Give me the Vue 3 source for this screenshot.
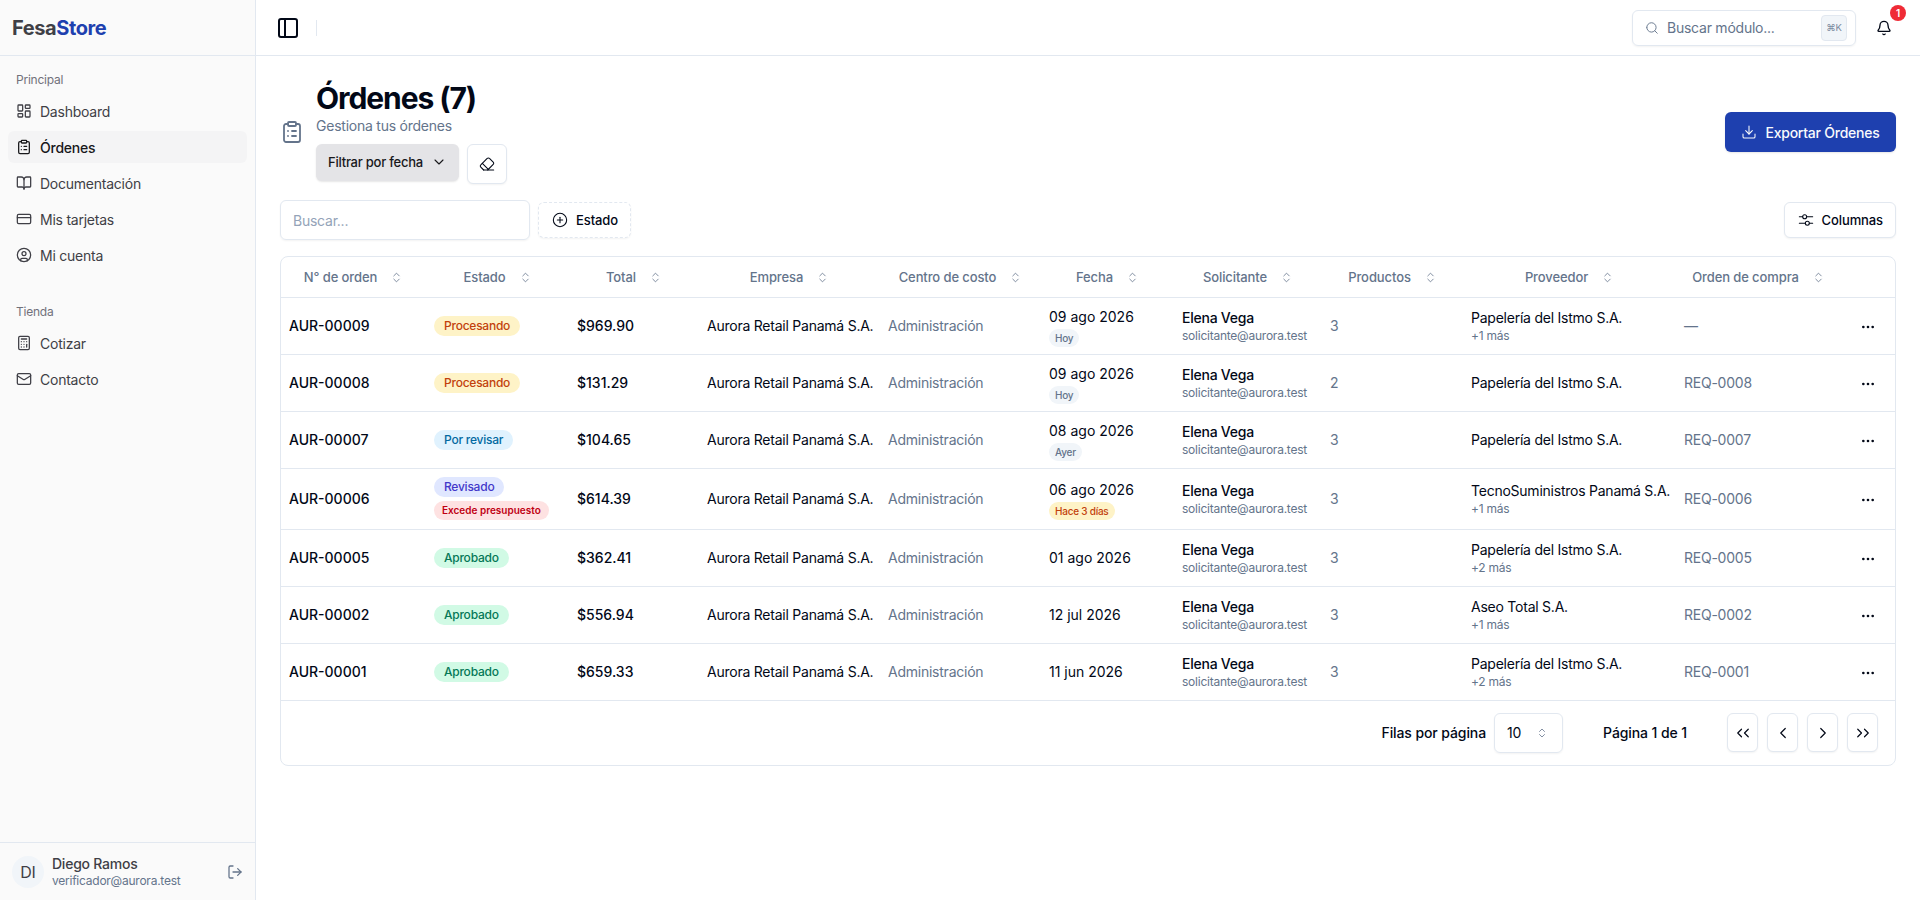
<script setup>
const c = (x, y, r) => `M${x - r} ${y}a${r} ${r} 0 1 0 ${2 * r} 0a${r} ${r} 0 1 0 ${-2 * r} 0`
const I = {
  dash: ['M4 3h5a1 1 0 0 1 1 1v7a1 1 0 0 1-1 1H4a1 1 0 0 1-1-1V4a1 1 0 0 1 1-1z', 'M15 3h5a1 1 0 0 1 1 1v3a1 1 0 0 1-1 1h-5a1 1 0 0 1-1-1V4a1 1 0 0 1 1-1z', 'M15 12h5a1 1 0 0 1 1 1v7a1 1 0 0 1-1 1h-5a1 1 0 0 1-1-1v-7a1 1 0 0 1 1-1z', 'M4 16h5a1 1 0 0 1 1 1v3a1 1 0 0 1-1 1H4a1 1 0 0 1-1-1v-3a1 1 0 0 1 1-1z'],
  clip: ['M9 2h6a1 1 0 0 1 1 1v2a1 1 0 0 1-1 1H9a1 1 0 0 1-1-1V3a1 1 0 0 1 1-1z', 'M16 4h2a2 2 0 0 1 2 2v14a2 2 0 0 1-2 2H6a2 2 0 0 1-2-2V6a2 2 0 0 1 2-2h2', 'M12 11h4', 'M12 16h4', 'M8 11h.01', 'M8 16h.01'],
  book: ['M12 7v14', 'M3 18a1 1 0 0 1-1-1V4a1 1 0 0 1 1-1h5a4 4 0 0 1 4 4 4 4 0 0 1 4-4h5a1 1 0 0 1 1 1v13a1 1 0 0 1-1 1h-6a3 3 0 0 0-3 3 3 3 0 0 0-3-3z'],
  card: ['M4 5h16a2 2 0 0 1 2 2v10a2 2 0 0 1-2 2H4a2 2 0 0 1-2-2V7a2 2 0 0 1 2-2z', 'M2 10h20'],
  user: [c(12, 12, 10), c(12, 10, 3), 'M7 20.662V19a2 2 0 0 1 2-2h6a2 2 0 0 1 2 2v1.662'],
  calc: ['M6 2h12a2 2 0 0 1 2 2v16a2 2 0 0 1-2 2H6a2 2 0 0 1-2-2V4a2 2 0 0 1 2-2z', 'M8 6h8', 'M16 14v4', 'M16 10h.01', 'M12 10h.01', 'M8 10h.01', 'M12 14h.01', 'M8 14h.01', 'M12 18h.01', 'M8 18h.01'],
  mail: ['M4 4h16a2 2 0 0 1 2 2v12a2 2 0 0 1-2 2H4a2 2 0 0 1-2-2V6a2 2 0 0 1 2-2z', 'M22 7l-8.97 5.7a1.94 1.94 0 0 1-2.06 0L2 7'],
  logout: ['M9 21H5a2 2 0 0 1-2-2V5a2 2 0 0 1 2-2h4', 'M16 17l5-5-5-5', 'M21 12H9'],
  panel: ['M5 3h14a2 2 0 0 1 2 2v14a2 2 0 0 1-2 2H5a2 2 0 0 1-2-2V5a2 2 0 0 1 2-2z', 'M9 3v18'],
  search: [c(11, 11, 8), 'M21 21l-4.3-4.3'],
  bell: ['M10.268 21a2 2 0 0 0 3.464 0', 'M3.262 15.326A1 1 0 0 0 4 17h16a1 1 0 0 0 .74-1.673C19.41 13.956 18 12.499 18 8A6 6 0 0 0 6 8c0 4.499-1.411 5.956-2.738 7.326'],
  download: ['M21 15v4a2 2 0 0 1-2 2H5a2 2 0 0 1-2-2v-4', 'M7 10l5 5 5-5', 'M12 15V3'],
  down: ['M6 9l6 6 6-6'],
  eraser: ['M7 21l-4.3-4.3c-1-1-1-2.5 0-3.4l9.6-9.6c1-1 2.5-1 3.4 0l5.6 5.6c1 1 1 2.5 0 3.4L13 21', 'M22 21H7', 'M5 11l9 9'],
  plus: [c(12, 12, 10), 'M8 12h8', 'M12 8v8'],
  sliders: ['M2 7h5', 'M13 7h9', c(10, 7, 3), 'M2 17h9', 'M17 17h5', c(14, 17, 3)],
  sort: ['M7 15l5 5 5-5', 'M7 9l5-5 5 5'],
  dots: [c(12, 12, 1), c(19, 12, 1), c(5, 12, 1)],
  first: ['M10 17l-5-5 5-5', 'M19 17l-5-5 5-5'],
  prev: ['M15 18l-6-6 6-6'],
  next: ['M9 18l6-6-6-6'],
  last: ['M5 17l5-5-5-5', 'M14 17l5-5-5-5'],
}
const groups = [
  { title: 'Principal', items: [
    { label: 'Dashboard', icon: 'dash' },
    { label: 'Órdenes', icon: 'clip', active: true },
    { label: 'Documentación', icon: 'book' },
    { label: 'Mis tarjetas', icon: 'card' },
    { label: 'Mi cuenta', icon: 'user' },
  ] },
  { title: 'Tienda', items: [
    { label: 'Cotizar', icon: 'calc' },
    { label: 'Contacto', icon: 'mail' },
  ] },
]
const heads = ['N° de orden', 'Estado', 'Total', 'Empresa', 'Centro de costo', 'Fecha', 'Solicitante', 'Productos', 'Proveedor', 'Orden de compra']
const rows = [
  { id: 'AUR-00009', st: ['Procesando', 'amber'], total: '$969.90', date: '09 ago 2026', tag: ['Hoy', 'gray'], n: 3, prov: 'Papelería del Istmo S.A.', more: '+1 más', oc: '—' },
  { id: 'AUR-00008', st: ['Procesando', 'amber'], total: '$131.29', date: '09 ago 2026', tag: ['Hoy', 'gray'], n: 2, prov: 'Papelería del Istmo S.A.', oc: 'REQ-0008' },
  { id: 'AUR-00007', st: ['Por revisar', 'sky'], total: '$104.65', date: '08 ago 2026', tag: ['Ayer', 'gray'], n: 3, prov: 'Papelería del Istmo S.A.', oc: 'REQ-0007' },
  { id: 'AUR-00006', st: ['Revisado', 'indigo'], over: true, total: '$614.39', date: '06 ago 2026', tag: ['Hace 3 días', 'amber'], n: 3, prov: 'TecnoSuministros Panamá S.A.', more: '+1 más', oc: 'REQ-0006' },
  { id: 'AUR-00005', st: ['Aprobado', 'green'], total: '$362.41', date: '01 ago 2026', n: 3, prov: 'Papelería del Istmo S.A.', more: '+2 más', oc: 'REQ-0005' },
  { id: 'AUR-00002', st: ['Aprobado', 'green'], total: '$556.94', date: '12 jul 2026', n: 3, prov: 'Aseo Total S.A.', more: '+1 más', oc: 'REQ-0002' },
  { id: 'AUR-00001', st: ['Aprobado', 'green'], total: '$659.33', date: '11 jun 2026', n: 3, prov: 'Papelería del Istmo S.A.', more: '+2 más', oc: 'REQ-0001' },
]
</script>

<template>
  <div class="app">
    <aside class="side">
      <div class="logo">Fesa<span>Store</span></div>
      <nav class="nav">
        <section v-for="g in groups" :key="g.title" class="group">
          <div class="glabel">{{ g.title }}</div>
          <a v-for="it in g.items" :key="it.label" class="item" :class="{ active: it.active }">
            <svg class="ic" viewBox="0 0 24 24"><path v-for="d in I[it.icon]" :key="d" :d="d" /></svg>
            {{ it.label }}
          </a>
        </section>
      </nav>
      <div class="me">
        <div class="avatar">DI</div>
        <div class="who">
          <div class="name">Diego Ramos</div>
          <div class="mail">verificador@aurora.test</div>
        </div>
        <svg class="ic out" viewBox="0 0 24 24"><path v-for="d in I.logout" :key="d" :d="d" /></svg>
      </div>
    </aside>

    <div class="right">
      <header class="top">
        <svg class="ic toggle" viewBox="0 0 24 24"><path v-for="d in I.panel" :key="d" :d="d" /></svg>
        <div class="sep"></div>
        <div class="grow"></div>
        <div class="cmd">
          <svg class="ic s14" viewBox="0 0 24 24"><path v-for="d in I.search" :key="d" :d="d" /></svg>
          <span class="cmdtxt">Buscar módulo...</span>
          <kbd class="kbd">⌘K</kbd>
        </div>
        <div class="bellwrap">
          <svg class="ic" viewBox="0 0 24 24"><path v-for="d in I.bell" :key="d" :d="d" /></svg>
          <span class="badge">1</span>
        </div>
      </header>

      <main class="main">
        <div class="head">
          <svg class="ic pageic" viewBox="0 0 24 24"><path v-for="d in I.clip" :key="d" :d="d" /></svg>
          <div class="htxt">
            <h1>Órdenes (7)</h1>
            <p>Gestiona tus órdenes</p>
            <div class="filters">
              <button class="fdate">Filtrar por fecha
                <svg class="ic" viewBox="0 0 24 24"><path v-for="d in I.down" :key="d" :d="d" /></svg>
              </button>
              <button class="btn erase">
                <svg class="ic" viewBox="0 0 24 24"><path v-for="d in I.eraser" :key="d" :d="d" /></svg>
              </button>
            </div>
          </div>
          <div class="grow"></div>
          <button class="export">
            <svg class="ic" viewBox="0 0 24 24"><path v-for="d in I.download" :key="d" :d="d" /></svg>
            Exportar Órdenes
          </button>
        </div>

        <div class="tools">
          <div class="search">Buscar...</div>
          <button class="btn small dashed">
            <svg class="ic" viewBox="0 0 24 24"><path v-for="d in I.plus" :key="d" :d="d" /></svg>
            Estado
          </button>
          <div class="grow"></div>
          <button class="btn small">
            <svg class="ic" viewBox="0 0 24 24"><path v-for="d in I.sliders" :key="d" :d="d" /></svg>
            Columnas
          </button>
        </div>

        <div class="card-t">
          <table>
            <colgroup>
              <col class="w1" /><col class="w2" /><col class="w3" /><col class="w4" /><col class="w5" /><col class="w6" /><col class="w7" /><col class="w8" /><col class="w9" /><col class="w10" /><col class="w11" />
            </colgroup>
            <thead>
              <tr>
                <th v-for="h in heads" :key="h">
                  <span class="th">{{ h }}
                    <svg class="ic sort" viewBox="0 0 24 24"><path v-for="d in I.sort" :key="d" :d="d" /></svg>
                  </span>
                </th>
                <th></th>
              </tr>
            </thead>
            <tbody>
              <tr v-for="r in rows" :key="r.id" :class="{ tall: r.over }">
                <td class="strong num">{{ r.id }}</td>
                <td>
                  <div class="stack">
                    <span class="pill" :class="r.st[1]">{{ r.st[0] }}</span>
                    <span v-if="r.over" class="over">Excede presupuesto</span>
                  </div>
                </td>
                <td class="strong num">{{ r.total }}</td>
                <td>Aurora Retail Panamá S.A.</td>
                <td class="muted">Administración</td>
                <td>
                  <div class="stack dates" :class="{ tagged: r.tag }">
                    <span class="num">{{ r.date }}</span>
                    <span v-if="r.tag" class="tag" :class="r.tag[1]">{{ r.tag[0] }}</span>
                  </div>
                </td>
                <td>
                  <div class="strong">Elena Vega</div>
                  <div class="sub">solicitante@aurora.test</div>
                </td>
                <td class="muted">{{ r.n }}</td>
                <td>
                  <div>{{ r.prov }}</div>
                  <div v-if="r.more" class="sub">{{ r.more }}</div>
                </td>
                <td class="muted">{{ r.oc }}</td>
                <td class="act">
                  <svg class="ic" viewBox="0 0 24 24"><path v-for="d in I.dots" :key="d" :d="d" /></svg>
                </td>
              </tr>
            </tbody>
          </table>
          <div class="pager">
            <span class="plabel">Filas por página</span>
            <div class="select">10
              <svg class="ic s12" viewBox="0 0 24 24"><path v-for="d in I.sort" :key="d" :d="d" /></svg>
            </div>
            <span class="pinfo">Página 1 de 1</span>
            <div class="pbtns">
              <button v-for="n in ['first', 'prev', 'next', 'last']" :key="n" class="btn pbtn">
                <svg class="ic" viewBox="0 0 24 24"><path v-for="d in I[n]" :key="d" :d="d" /></svg>
              </button>
            </div>
          </div>
        </div>
      </main>
    </div>
  </div>
</template>

<style>
html, body { margin: 0; background: #fff; }
</style>

<style scoped>
* { box-sizing: border-box; }
.app { display: flex; height: 900px; overflow: hidden; font-family: Inter, "Liberation Sans", sans-serif; font-size: 14px; letter-spacing: -0.017em; color: #020817; background: #fff; }
button { font: inherit; letter-spacing: inherit; color: inherit; cursor: pointer; }
.ic { width: 16px; height: 16px; flex: none; fill: none; stroke: currentColor; stroke-width: 1.6; stroke-linecap: round; stroke-linejoin: round; }
.grow { flex: 1; }
.num { letter-spacing: 0; }

.side { width: 256px; flex: none; display: flex; flex-direction: column; background: #fafafa; border-right: 1px solid #e2e8f0; }
.logo { height: 56px; flex: none; display: flex; align-items: center; padding-left: 12px; font-size: 20px; font-weight: 700; letter-spacing: -0.4px; color: #3f3f46; border-bottom: 1px solid #e2e8f0; }
.logo span { color: #1e40af; }
.nav { flex: 1; padding-top: 7px; }
.group { padding: 0 8px; margin-bottom: 24px; }
.glabel { height: 32px; display: flex; align-items: center; padding-left: 8px; font-size: 12px; font-weight: 400; color: #71717a; }
.item { height: 32px; margin-bottom: 4px; display: flex; align-items: center; gap: 8px; padding-left: 8px; border-radius: 6px; color: #3f3f46; }
.item .ic { stroke-width: 1.9; }
.item.active { background: #f4f4f5; color: #18181b; font-weight: 500; }
.me { height: 58px; flex: none; display: flex; align-items: center; gap: 8px; padding: 0 12px; border-top: 1px solid #e2e8f0; }
.avatar { width: 32px; height: 32px; border-radius: 50%; background: #f1f5f9; display: flex; align-items: center; justify-content: center; color: #3f3f46; font-size: 16px; }
.who { flex: 1; line-height: 16px; }
.name { font-weight: 500; color: #3f3f46; font-size: 14px; line-height: 18px; }
.mail { font-size: 12px; color: #64748b; }
.out { color: #64748b; margin-right: 0; stroke-width: 1.9; }

.right { flex: 1; min-width: 0; display: flex; flex-direction: column; }
.top { height: 56px; flex: none; display: flex; align-items: center; padding: 0 14px 0 22px; border-bottom: 1px solid #e2e8f0; }
.toggle { width: 24px; height: 24px; margin-left: -2px; color: #020817; stroke-width: 2; }
.sep { width: 1px; height: 16px; margin-left: 16px; background: #e2e8f0; }
.cmd { width: 224px; height: 36px; display: flex; align-items: center; gap: 8px; padding: 0 12px; border: 1px solid #e2e8f0; border-radius: 6px; box-shadow: 0 1px 2px rgba(0, 0, 0, .05); color: #64748b; }
.s14 { width: 14px; height: 14px; }
.cmdtxt { flex: 1; }
.kbd { width: 26px; height: 26px; margin-right: -4px; display: flex; align-items: center; justify-content: center; background: #f1f5f9; border: 1px solid #e2e8f0; border-radius: 4px; font-family: Inter, "DejaVu Sans", sans-serif; font-size: 9.5px; font-weight: 400; color: #7c8aa0; }
.bellwrap { position: relative; width: 16px; height: 16px; margin-left: 20px; margin-right: 14px; color: #020817; }
.bellwrap .ic { display: block; stroke-width: 2; }
.badge { position: absolute; left: 14px; top: -15px; width: 16px; height: 16px; border-radius: 50%; background: #ef2b36; color: #fff; font-size: 10px; font-weight: 600; display: flex; align-items: center; justify-content: center; }

.main { flex: 1; padding: 24px 24px 0; }
.head { display: flex; align-items: center; margin-bottom: 16px; }
.pageic { width: 24px; height: 24px; color: #64748b; margin: 0 12px 0 0; stroke-width: 1.8; }
.htxt { display: flex; flex-direction: column; align-items: flex-start; }
h1 { margin: 0; font-size: 30px; line-height: 36px; font-weight: 700; letter-spacing: -1.08px; color: #020817; }
p { margin: 0; color: #64748b; line-height: 20px; }
.filters { display: flex; align-items: flex-start; gap: 8px; margin-top: 8px; }
.fdate { height: 37px; width: 143px; display: flex; align-items: center; justify-content: space-between; padding: 0 12px 2px; border: 0; border-radius: 6px; background: #e4e4e7; box-shadow: 0 1px 2px rgba(0, 0, 0, .1); font-size: 13px; font-weight: 500; color: #18181b; }
.btn { display: flex; align-items: center; justify-content: center; background: #fff; border: 1px solid #e2e8f0; border-radius: 6px; box-shadow: 0 1px 2px rgba(0, 0, 0, .05); }
.erase { width: 40px; height: 40px; }
.export { width: 171px; height: 40px; display: flex; align-items: center; justify-content: center; gap: 8px; background: #1e40af; color: #f8fafc; border: 0; border-radius: 6px; font-weight: 500; box-shadow: 0 1px 2px rgba(0, 0, 0, .1); }

.tools { display: flex; align-items: center; gap: 8px; height: 40px; margin-bottom: 16px; }
.search { width: 250px; height: 40px; display: flex; align-items: center; padding: 0 12px; border: 1px solid #e2e8f0; border-radius: 6px; box-shadow: 0 1px 2px rgba(0, 0, 0, .05); color: #94a3b8; }
.small { height: 36px; gap: 8px; padding: 0 12px 0 13px; font-size: 13px; font-weight: 500; letter-spacing: -0.1px; }
.dashed { border-style: dashed; }

.card-t { border: 1px solid #e2e8f0; border-radius: 8px; overflow: hidden; }
table { width: 100%; table-layout: fixed; border-collapse: collapse; }
.w1 { width: 145px; } .w2 { width: 143px; } .w3 { width: 130px; } .w4 { width: 181px; } .w5 { width: 161px; } .w6 { width: 133px; } .w7 { width: 148px; } .w8 { width: 141px; } .w9 { width: 213px; } .w10 { width: 165px; }
th { height: 40px; padding: 0 8px; font-weight: 500; color: #64748b; text-align: center; border-bottom: 1px solid #e2e8f0; }
.th { display: inline-flex; align-items: center; gap: 13px; font-size: 13px; letter-spacing: -0.1px; white-space: nowrap; }
.sort { width: 13px; height: 13px; stroke-width: 1.5; color: #64748b; }
td { height: 57px; padding: 0 8px; border-bottom: 1px solid #e2e8f0; line-height: 20px; white-space: nowrap; font-size: 14px; }
.tall td { height: 61px; }
.strong { font-weight: 500; }
.muted { color: #64748b; }
.sub { font-size: 12px; line-height: 16px; color: #64748b; }
.stack { display: flex; flex-direction: column; align-items: flex-start; gap: 4px; }
.dates { gap: 2px; }
.dates.tagged { padding-top: 2px; }
.pill { display: inline-block; padding: 0 10px; height: 20px; line-height: 20px; border-radius: 10px; font-size: 12px; font-weight: 500; }
.amber { background: #fef3c7; color: #c2410c; }
.sky { background: #e0f2fe; color: #0369a1; }
.indigo { background: #e0e7ff; color: #4338ca; }
.green { background: #d1fae5; color: #047857; }
.gray { background: #f1f5f9; color: #64748b; }
.over { height: 19px; line-height: 19px; padding: 0 8px; border-radius: 10px; background: #fee2e2; color: #c00012; font-size: 10px; font-weight: 600; letter-spacing: 0; }
.tag { height: 18px; line-height: 18px; padding: 0 6px; border-radius: 9px; font-size: 10px; font-weight: 500; }
.act { text-align: center; padding: 0; }
.act .ic { display: inline-block; vertical-align: middle; stroke-width: 2; }

.pager { height: 64px; display: flex; align-items: center; justify-content: flex-end; padding-right: 17px; font-weight: 500; letter-spacing: -0.1px; }
.plabel { margin-right: 8px; }
.select { width: 69px; height: 40px; display: flex; align-items: center; justify-content: space-between; padding: 0 14px 0 12px; border: 1px solid #e2e8f0; border-radius: 6px; font-weight: 400; box-shadow: 0 1px 2px rgba(0, 0, 0, .05); }
.s12 { width: 12px; height: 12px; color: #64748b; }
.pinfo { width: 164px; text-align: center; }
.pbtns { display: flex; gap: 9px; }
.pbtn { width: 31px; height: 39px; padding: 0; }
.pbtn .ic { width: 18px; height: 18px; }
</style>
